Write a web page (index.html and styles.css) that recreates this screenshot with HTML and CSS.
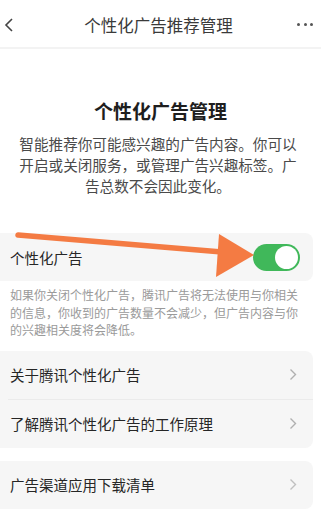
FILE: index.html
```html
<!DOCTYPE html>
<html lang="zh">
<head>
<meta charset="utf-8">
<link rel="stylesheet" href="styles.css">
</head>
<body>
<div class="page">
  <header class="nav">
    <span class="nav-back"><svg width="10" height="16" viewBox="0 0 10 16"><path d="M8 2 L2 8 L8 14" fill="none" stroke="#444" stroke-width="1.6"/></svg></span>
    <span class="nav-title">个性化广告推荐管理</span>
    <span class="nav-more"><i></i><i></i><i></i></span>
  </header>

  <h1 class="heading">个性化广告管理</h1>
  <p class="desc">智能推荐你可能感兴趣的广告内容。你可以开启或关闭服务，或管理广告兴趣标签。广告总数不会因此变化。</p>

  <div class="card card-toggle">
    <div class="row">
      <span class="row-label">个性化广告</span>
      <span class="switch"><span class="knob"></span></span>
    </div>
  </div>
  <p class="note">如果你关闭个性化广告，腾讯广告将无法使用与你相关的信息，你收到的广告数量不会减少，但广告内容与你的兴趣相关度将会降低。</p>

  <div class="card card-links">
    <div class="row">
      <span class="row-label">关于腾讯个性化广告</span>
      <svg class="chev" width="8" height="13" viewBox="0 0 8 13"><path d="M1.5 1.5 L6.5 6.5 L1.5 11.5" fill="none" stroke="#b0b0b0" stroke-width="1.4"/></svg>
    </div>
    <div class="divider"></div>
    <div class="row">
      <span class="row-label">了解腾讯个性化广告的工作原理</span>
      <svg class="chev" width="8" height="13" viewBox="0 0 8 13"><path d="M1.5 1.5 L6.5 6.5 L1.5 11.5" fill="none" stroke="#b0b0b0" stroke-width="1.4"/></svg>
    </div>
  </div>

  <div class="card card-last">
    <div class="row">
      <span class="row-label">广告渠道应用下载清单</span>
      <svg class="chev" width="8" height="13" viewBox="0 0 8 13"><path d="M1.5 1.5 L6.5 6.5 L1.5 11.5" fill="none" stroke="#c0c0c0" stroke-width="1.4"/></svg>
    </div>
  </div>

  <svg class="arrow" width="321" height="509" viewBox="0 0 321 509">
    <line x1="18" y1="235" x2="222" y2="252" stroke="#f47b43" stroke-width="5.5" stroke-linecap="round"/>
    <polygon points="219,234 254,255 216,277" fill="#f47b43"/>
  </svg>
</div>
</body>
</html>
```

FILE: styles.css
```css
* { box-sizing: border-box; }
html, body { margin: 0; padding: 0; background: #fff; }
body {
  font-family: "Noto Sans CJK SC", "Noto Sans", sans-serif;
  color: #222;
}
.page {
  position: relative;
  width: 321px;
  height: 509px;
  overflow: hidden;
}
.nav {
  height: 49px;
  display: flex;
  align-items: center;
  justify-content: space-between;
  padding: 2px 8px 0 4px;
  border-bottom: 2px solid #f3f3f3;
}
.nav-back { display: flex; width: 20px; }
.nav-title {
  font-size: 16.5px;
  color: #3a3a3a;
}
.nav-more {
  display: flex;
  gap: 3.5px;
  width: 20px;
  justify-content: flex-end;
}
.nav-more i {
  width: 3px;
  height: 3px;
  border-radius: 50%;
  background: #555;
}
.heading {
  margin: 49px 0 0;
  font-size: 19px;
  line-height: 26px;
  font-weight: 700;
  text-align: center;
  color: #1e1e1e;
}
.desc {
  margin: 9px 0 0;
  padding: 0 20px 0 15px;
  font-size: 14.6px;
  line-height: 21px;
  color: #4a4a4a;
  text-align: center;
}
.card {
  margin-right: 8px;
  background: #f6f6f6;
  border-radius: 0 8px 8px 0;
}
.card-toggle { margin-top: 37px; }
.row {
  height: 48px;
  display: flex;
  align-items: center;
  justify-content: space-between;
  padding: 0 16px 0 10px;
}
.row-label {
  font-size: 14.5px;
  color: #262626;
}
.switch {
  width: 47px;
  height: 27px;
  border-radius: 14px;
  background: #40b85a;
  display: flex;
  align-items: center;
  justify-content: flex-end;
  padding: 2px;
  margin-right: -3px;
}
.knob {
  width: 23px;
  height: 23px;
  border-radius: 50%;
  background: #fff;
}
.note {
  margin: 5px 0 0;
  padding: 0 22px 0 10px;
  font-size: 12px;
  line-height: 17.5px;
  color: #9a9a9a;
}
.card-links { margin-top: 12px; }
.divider {
  height: 1px;
  background: #ebebeb;
  margin-left: 8px;
}
.chev { display: block; }
.card-last { margin-top: 13px; }
.arrow {
  position: absolute;
  left: 0;
  top: 0;
  pointer-events: none;
}
```
